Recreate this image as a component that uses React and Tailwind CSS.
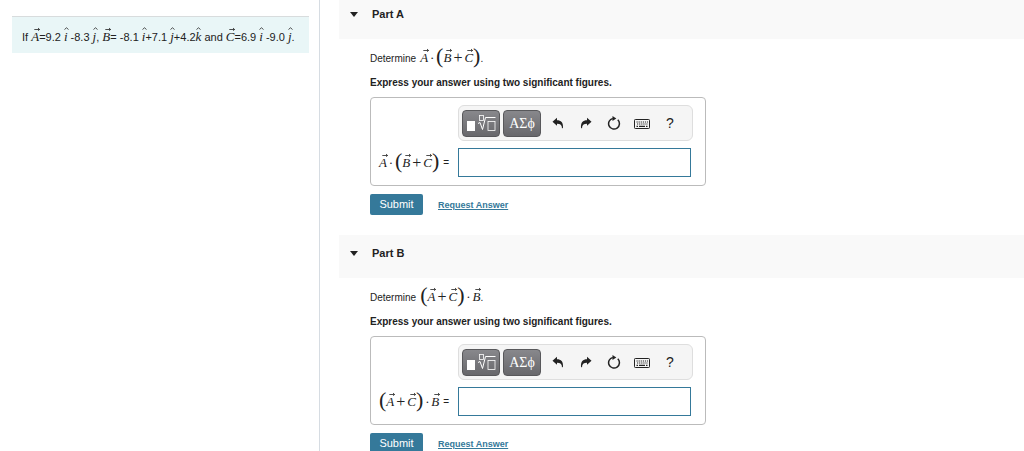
import React, { useState } from "react";

// Vector letter with an arrow above it
const Vec = ({ children }) => (
  <span className="relative inline-block font-['Liberation_Serif',serif] text-[13px] leading-4 italic">
    {children}
    <svg
      viewBox="0 0 6 4"
      className="absolute -top-0.5 left-[3px] h-1 w-1.5"
      fill="none"
      stroke="currentColor"
      strokeWidth="0.8"
      aria-hidden="true"
    >
      <path d="M0.3 2.5H5.5M4 1L5.6 2.5L4 3.6" />
    </svg>
  </span>
);

// Unit vector letter with a hat
const Hat = ({ children }) => (
  <span className="relative inline-block font-['Liberation_Serif',serif] text-[13px] leading-4 italic">
    {children}
    <svg
      viewBox="0 0 5 3"
      className="absolute -top-0.5 left-0 h-[3px] w-[5px]"
      fill="none"
      stroke="currentColor"
      strokeWidth="0.8"
      aria-hidden="true"
    >
      <path d="M0.5 2.5L2.5 0.8L4.5 2.5" />
    </svg>
  </span>
);

const Paren = ({ children }) => (
  <span className="pb-1 font-['Liberation_Serif',serif] text-[22px] leading-5">{children}</span>
);

const Sum = ({ left, right }) => (
  <span className="inline-flex items-center">
    <Paren>(</Paren>
    <Vec>{left}</Vec>
    <span className="px-0.5 font-['Liberation_Serif',serif] text-[16px] leading-4">+</span>
    <Vec>{right}</Vec>
    <Paren>)</Paren>
  </span>
);

const Dot = () => <span className="w-2 text-center font-['Liberation_Serif',serif] text-[13px]">·</span>;

const FormulaA = () => (
  <span className="inline-flex items-center">
    <Vec>A</Vec>
    <Dot />
    <Sum left="B" right="C" />
  </span>
);

const FormulaB = () => (
  <span className="inline-flex items-center">
    <Sum left="A" right="C" />
    <Dot />
    <Vec>B</Vec>
  </span>
);

const TemplateIcon = () => (
  <svg viewBox="0 0 30 20" className="h-5 w-[30px]" fill="none" stroke="white" aria-hidden="true">
    <rect x="1" y="8" width="8" height="10" fill="white" stroke="none" />
    <rect x="13.5" y="2.5" width="4" height="5" strokeWidth="0.8" />
    <path d="M12 10.5L14 9.5L16.5 16.5L19.5 4.5H29.5" strokeWidth="1" />
    <rect x="22" y="8.5" width="7" height="9" strokeWidth="0.8" />
  </svg>
);

const UndoIcon = () => (
  <svg viewBox="0 0 12 12" className="size-3" fill="currentColor" aria-hidden="true">
    <path d="M0.5 4.8L5 0.8V3.2C9 3.2 11.4 5.4 11 10.8L10 11.5C10 8.2 8.4 6.8 5 6.8V8.8Z" />
  </svg>
);

const RedoIcon = () => (
  <svg viewBox="0 0 12 12" className="size-3" fill="currentColor" aria-hidden="true">
    <path d="M11.5 4.8L7 0.8V3.2C3 3.2 0.6 5.4 1 10.8L2 11.5C2 8.2 3.6 6.8 7 6.8V8.8Z" />
  </svg>
);

const ResetIcon = () => (
  <svg viewBox="0 0 14 14" className="size-3.5" fill="none" aria-hidden="true">
    <path d="M10.8 3.8A5.4 5.4 0 1 1 5.8 2.4" stroke="currentColor" strokeWidth="1.5" />
    <path d="M5.5 0L9.3 2.6L5.5 5Z" fill="currentColor" />
  </svg>
);

const KeyboardIcon = () => (
  <svg viewBox="0 0 16 10" className="h-2.5 w-4" fill="none" stroke="currentColor" aria-hidden="true">
    <rect x="0.5" y="0.5" width="15" height="9" rx="0.8" />
    <path d="M2.5 3H14M3 5H14" strokeWidth="1.2" strokeDasharray="1.2 0.9" />
    <path d="M2.5 7.3H4M5 7.3H11M12 7.3H13.5" strokeWidth="1.2" />
  </svg>
);

const darkButton =
  "flex h-[27px] w-[38px] items-center justify-center rounded border border-[#58585b] bg-linear-to-b from-[#88888c] to-[#68686c] text-white";
const toolButton = "flex h-7 w-7 items-center justify-center text-[#222]";

const Toolbar = () => (
  <div className="flex h-9 items-center rounded-md border border-[#dedede] bg-[#f5f5f5] px-[3px]">
    <button type="button" aria-label="Templates" className={darkButton}>
      <TemplateIcon />
    </button>
    <button type="button" aria-label="Symbols" className={`${darkButton} mr-[3px] ml-[3px] font-['Liberation_Serif',serif] text-[14px]`}>
      ΑΣϕ
    </button>
    <button type="button" aria-label="Undo" className={toolButton}>
      <UndoIcon />
    </button>
    <button type="button" aria-label="Redo" className={toolButton}>
      <RedoIcon />
    </button>
    <button type="button" aria-label="Reset" className={toolButton}>
      <ResetIcon />
    </button>
    <button type="button" aria-label="Keyboard shortcuts" className={`${toolButton} pt-0.5`}>
      <KeyboardIcon />
    </button>
    <button type="button" aria-label="Help" className={`${toolButton} text-[14px]`}>
      ?
    </button>
  </div>
);

const Part = ({ name, formula }) => {
  const [answer, setAnswer] = useState("");
  const [open, setOpen] = useState(true);
  const inputId = `answer-${name}`;

  return (
    <section className="pb-5">
      <h2 className="h-[43px] bg-[#f9f9f9] pt-2.5 pl-[11px]">
        <button
          type="button"
          aria-expanded={open}
          onClick={() => setOpen(!open)}
          className="flex items-center gap-3.5 text-[11px] leading-4 font-bold text-[#222]"
        >
          <svg viewBox="0 0 8 5" className="h-[5px] w-2" fill="currentColor" aria-hidden="true">
            <path d="M0 0H8L4 5Z" />
          </svg>
          Part {name}
        </button>
      </h2>
      {open && (
        <div className="pt-2 pl-[31px]">
          <p className="flex h-[22px] items-center whitespace-nowrap">
            <span className="mr-1">Determine</span>
            {formula}.
          </p>
          <p className="mt-1.5 mb-1.5 text-[10px] leading-4 font-bold whitespace-nowrap">
            Express your answer using two significant figures.
          </p>
          <div className="grid w-full max-w-[336px] grid-cols-[79px_1fr] gap-y-[7px] rounded border border-[#bbb] pt-[7px] pr-3 pb-2 pl-2">
            <div className="col-start-2">
              <Toolbar />
            </div>
            <label htmlFor={inputId} className="flex items-center gap-1 whitespace-nowrap">
              {formula}
              <span>=</span>
            </label>
            <input
              id={inputId}
              type="text"
              value={answer}
              onChange={(e) => setAnswer(e.target.value)}
              className="mr-0.5 h-[29px] border border-[#35799a] bg-white px-2 text-sm outline-none"
            />
          </div>
          <div className="mt-2 flex items-center gap-[15px]">
            <button type="button" className="h-[21px] w-[53px] rounded-xs bg-[#35799a] text-[11px] text-white">
              Submit
            </button>
            <a href="#answer" className="text-[9px] leading-4 font-bold text-[#35799a] underline">
              Request Answer
            </a>
          </div>
        </div>
      )}
    </section>
  );
};

export default function App() {
  return (
    <div className="flex h-screen overflow-hidden bg-white font-['Liberation_Sans',Arial,sans-serif] text-[10px] text-[#222]">
      <aside className="w-80 shrink-0 border-r border-[#d6dce2] pt-4 pr-2.5 pl-3">
        <p className="border-t border-[#d8dcdd] bg-[#e9f6f7] px-2.5 pt-3 pb-2 text-[11px] leading-4 whitespace-nowrap">
          If <Vec>A</Vec>=9.2 <Hat>i</Hat> -8.3 <Hat>j</Hat>, <Vec>B</Vec>= -8.1 <Hat>i</Hat>+7.1 <Hat>j</Hat>+4.2
          <Hat>k</Hat> and <Vec>C</Vec>=6.9 <Hat>i</Hat> -9.0 <Hat>j</Hat>.
        </p>
      </aside>
      <main className="-mt-1 min-w-0 flex-1 pl-[19px]">
        <Part name="A" formula={<FormulaA />} />
        <Part name="B" formula={<FormulaB />} />
      </main>
    </div>
  );
}
